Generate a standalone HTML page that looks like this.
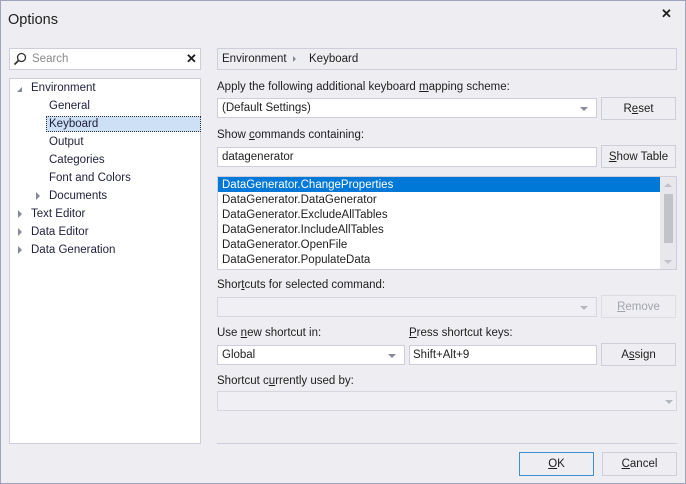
<!DOCTYPE html>
<html><head><style>
*{box-sizing:border-box;margin:0;padding:0}
body{width:686px;height:484px;background:#eeeef2;font-family:"Liberation Sans",sans-serif;font-size:11.5px;line-height:17px;color:#1e1e1e;position:relative;overflow:hidden}
.win{position:absolute;left:0;top:0;width:686px;height:484px;border:1px solid #a0a3bd}
.a{position:absolute;white-space:nowrap}
.box{position:absolute;background:#fff;border:1px solid #cccedb}
.dis{position:absolute;background:#f0f0f4;border:1px solid #d6d6de}
.btn{position:absolute;background:#eeeef2;border:1px solid #ccced8;text-align:center;line-height:23px}
.tri{position:absolute;width:0;height:0;border-left:4px solid transparent;border-right:4px solid transparent;border-top:4px solid #868999}
.ar{position:absolute;width:0;height:0;border-top:4px solid transparent;border-bottom:4px solid transparent;border-left:4px solid #868999}
.t{position:absolute;white-space:nowrap;color:#1e1e3c}
.li{position:absolute;left:4px;white-space:nowrap;line-height:15px}
u{text-decoration:underline}
</style></head><body>
<div class="win"></div>
<div class="a" style="left:8px;top:12px;font-size:14.5px;color:#1e1e1e">Options</div>
<div class="a" style="left:661px;top:5px;font-size:13px;font-weight:bold">✕</div>

<div class="box" style="left:9px;top:48px;width:192px;height:22px">
<svg style="position:absolute;left:3px;top:3px" width="14" height="14" viewBox="0 0 14 14"><circle cx="8.5" cy="5.5" r="4" fill="none" stroke="#333" stroke-width="1.3"/><line x1="5.5" y1="8.5" x2="1.5" y2="12.5" stroke="#333" stroke-width="1.8"/></svg>
<div class="a" style="left:22px;top:2px;color:#8a8a8a">Search</div>
<div class="a" style="left:176px;top:1px;font-size:13px;font-weight:bold">✕</div>
</div>

<div class="box" style="left:9px;top:78px;width:192px;height:366px">
<div style="position:absolute;left:7px;top:8px;width:0;height:0;border-left:5px solid transparent;border-bottom:5px solid #868999"></div>
<div class="t" style="left:21px;top:1px">Environment</div>
<div class="t" style="left:39px;top:19px">General</div>
<div style="position:absolute;left:36px;top:37px;width:155px;height:16px;background:#cde0f5;border:1px dotted #333"></div>
<div class="t" style="left:39px;top:37px">Keyboard</div>
<div class="t" style="left:39px;top:55px">Output</div>
<div class="t" style="left:39px;top:73px">Categories</div>
<div class="t" style="left:39px;top:91px">Font and Colors</div>
<div class="ar" style="left:26px;top:113px"></div>
<div class="t" style="left:39px;top:109px">Documents</div>
<div class="ar" style="left:8px;top:131px"></div>
<div class="t" style="left:21px;top:127px">Text Editor</div>
<div class="ar" style="left:8px;top:149px"></div>
<div class="t" style="left:21px;top:145px">Data Editor</div>
<div class="ar" style="left:8px;top:167px"></div>
<div class="t" style="left:21px;top:163px">Data Generation</div>
</div>

<div class="dis" style="left:217px;top:48px;width:460px;height:22px;background:#eeeef2;border-color:#cccedb">
<div class="a" style="left:4px;top:2px">Environment</div>
<div class="ar" style="left:75px;top:7px;border-top-width:3px;border-bottom-width:3px;border-left-width:3px"></div>
<div class="a" style="left:91px;top:2px">Keyboard</div>
</div>

<div class="a" style="left:217px;top:79px">Apply the following additional keyboard <u>m</u>apping scheme:</div>
<div class="box" style="left:217px;top:98px;width:380px;height:20px"><div class="a" style="left:4px;top:1px">(Default Settings)</div><div class="tri" style="left:362px;top:8px"></div></div>
<div class="btn" style="left:601px;top:97px;width:75px;height:23px">R<u>e</u>set</div>

<div class="a" style="left:217px;top:127px">Show <u>c</u>ommands containing:</div>
<div class="box" style="left:217px;top:147px;width:380px;height:20px"><div class="a" style="left:4px;top:1px">datagenerator</div></div>
<div class="btn" style="left:601px;top:145px;width:75px;height:23px"><u>S</u>how Table</div>

<div class="box" style="left:217px;top:176px;width:460px;height:94px">
<div style="position:absolute;left:0;top:0;width:442px;height:15px;background:#0078d7"></div>
<div class="li" style="top:1px;color:#fff">DataGenerator.ChangeProperties</div>
<div class="li" style="top:16px">DataGenerator.DataGenerator</div>
<div class="li" style="top:31px">DataGenerator.ExcludeAllTables</div>
<div class="li" style="top:46px">DataGenerator.IncludeAllTables</div>
<div class="li" style="top:61px">DataGenerator.OpenFile</div>
<div class="li" style="top:76px">DataGenerator.PopulateData</div>
<div style="position:absolute;left:442px;top:0;width:16px;height:92px;background:#e8e8ec"></div>
<div style="position:absolute;left:446px;top:17px;width:9px;height:49px;background:#c2c3c9"></div>
<div style="position:absolute;left:446px;top:6px;width:0;height:0;border-left:4px solid transparent;border-right:4px solid transparent;border-bottom:4px solid #c2c3c9"></div>
<div class="tri" style="left:446px;top:83px;border-top-color:#c2c3c9"></div>
</div>

<div class="a" style="left:217px;top:277px">Shor<u>t</u>cuts for selected command:</div>
<div class="dis" style="left:217px;top:297px;width:380px;height:20px"><div class="tri" style="left:362px;top:8px;border-top-color:#b5b7c0"></div></div>
<div class="btn" style="left:601px;top:295px;width:75px;height:23px;color:#a2a4ab;border-color:#dcdce2"><u>R</u>emove</div>

<div class="a" style="left:217px;top:325px">Use <u>n</u>ew shortcut in:</div>
<div class="a" style="left:409px;top:325px"><u>P</u>ress shortcut keys:</div>
<div class="box" style="left:217px;top:345px;width:188px;height:20px"><div class="a" style="left:4px;top:1px">Global</div><div class="tri" style="left:170px;top:8px"></div></div>
<div class="box" style="left:409px;top:345px;width:188px;height:20px"><div class="a" style="left:3px;top:1px">Shift+Alt+9</div></div>
<div class="btn" style="left:601px;top:343px;width:75px;height:23px">A<u>s</u>sign</div>

<div class="a" style="left:217px;top:373px">Shortcut c<u>u</u>rrently used by:</div>
<div class="dis" style="left:217px;top:391px;width:460px;height:20px"><div class="tri" style="left:447px;top:8px;border-top-color:#b5b7c0"></div></div>

<div style="position:absolute;left:217px;top:443px;width:460px;height:1px;background:#cccedb"></div>
<div class="btn" style="left:519px;top:452px;width:75px;height:24px;border-color:#3c8fd8"><u>O</u>K</div>
<div class="btn" style="left:602px;top:452px;width:75px;height:24px"><u>C</u>ancel</div>
</body></html>
